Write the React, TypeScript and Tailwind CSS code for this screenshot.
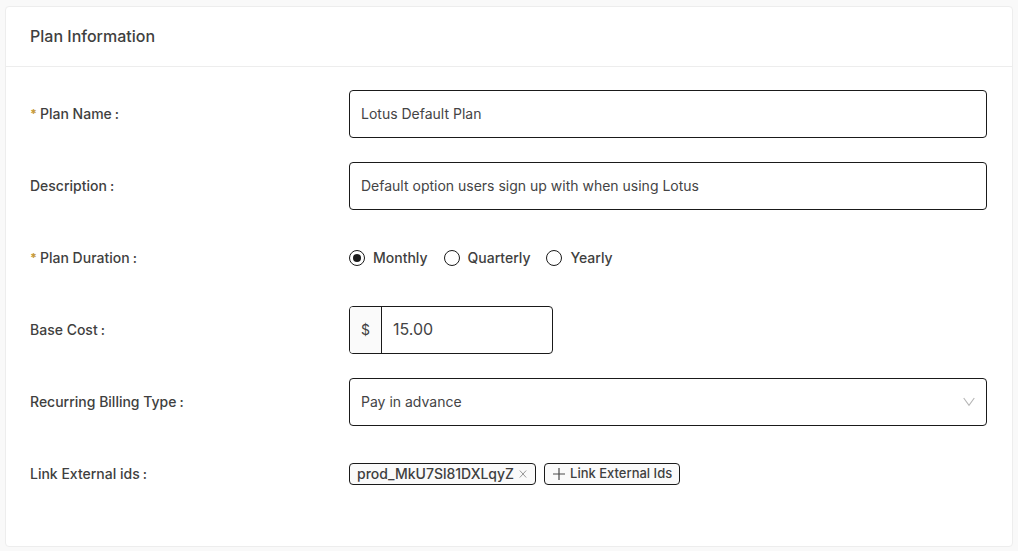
import { useState, type ReactNode } from "react";

const box =
  "h-12 w-full rounded-[4px] border border-[#1a1a1a] bg-white px-[11px] text-sm text-[#444445] outline-none";

function Label({
  id,
  htmlFor,
  required,
  children,
}: {
  id?: string;
  htmlFor?: string;
  required?: boolean;
  children: ReactNode;
}) {
  return (
    <label
      id={id}
      htmlFor={htmlFor}
      className="flex items-center text-sm font-medium text-[#3f3f40]"
    >
      {required && (
        <span aria-hidden="true" className="w-2.5 text-xs font-extrabold text-[#c69b3b]">
          *
        </span>
      )}
      {children}
      <span className="ml-[3px]">:</span>
    </label>
  );
}

function Row({ label, children }: { label: ReactNode; children: ReactNode }) {
  return (
    <div className="grid min-h-12 grid-cols-3 items-center">
      {label}
      <div className="col-span-2">{children}</div>
    </div>
  );
}

const durations = ["Monthly", "Quarterly", "Yearly"];

export default function App() {
  const [duration, setDuration] = useState("Monthly");
  const [linkedIds, setLinkedIds] = useState(["prod_MkU7Sl81DXLqyZ"]);

  return (
    <main className="min-h-screen bg-[#f9f9f9] px-[5px] pt-1.5 font-['Inter',sans-serif] text-[#3f3f40]">
      <section className="rounded-[4px] border border-[#ededed] bg-white">
        <header className="border-b border-[#ededed] px-6 py-[18px]">
          <h1 className="text-base leading-[23px] font-medium">Plan Information</h1>
        </header>
        <form
          className="flex flex-col gap-6 pt-[23px] pr-[25px] pb-12 pl-6"
          onSubmit={(e) => e.preventDefault()}
        >
          <Row label={<Label htmlFor="plan-name" required>Plan Name</Label>}>
            <input
              id="plan-name"
              type="text"
              defaultValue="Lotus Default Plan"
              className={`${box} pb-0.5`}
            />
          </Row>

          <Row label={<Label htmlFor="description">Description</Label>}>
            <input
              id="description"
              type="text"
              defaultValue="Default option users sign up with when using Lotus"
              className={`${box} pb-0.5`}
            />
          </Row>

          <Row label={<Label id="duration-label" required>Plan Duration</Label>}>
            <div role="radiogroup" aria-labelledby="duration-label" className="flex gap-4">
              {durations.map((name) => (
                <label key={name} className="flex items-center gap-2 text-sm font-medium">
                  <input
                    type="radio"
                    name="duration"
                    value={name}
                    checked={duration === name}
                    onChange={() => setDuration(name)}
                    className="grid size-4 appearance-none place-items-center rounded-full border border-[#1a1a1a] bg-white before:size-2 before:rounded-full checked:before:bg-[#1a1a1a]"
                  />
                  {name}
                </label>
              ))}
            </div>
          </Row>

          <Row label={<Label htmlFor="base-cost">Base Cost</Label>}>
            <div className="flex h-12 w-[204px] overflow-hidden rounded-[4px] border border-[#1a1a1a] bg-white">
              <span className="flex w-8 items-center justify-center border-r border-[#1a1a1a] bg-[#fafafa] text-sm">
                $
              </span>
              <input
                id="base-cost"
                type="text"
                inputMode="decimal"
                defaultValue="15.00"
                className="min-w-0 flex-1 px-[11px] pb-0.5 text-base text-[#444445] outline-none"
              />
            </div>
          </Row>

          <Row label={<Label htmlFor="billing-type">Recurring Billing Type</Label>}>
            <div className="relative">
              <select id="billing-type" defaultValue="advance" className={`${box} appearance-none`}>
                <option value="advance">Pay in advance</option>
                <option value="arrears">Pay in arrears</option>
              </select>
              <svg
                aria-hidden="true"
                viewBox="0 0 12 12"
                className="pointer-events-none absolute top-[18px] right-3 size-3"
                fill="none"
                stroke="#b5b5b5"
              >
                <path d="M0.7 2 L6 9.3 L11.3 2" strokeWidth="1.1" />
              </svg>
            </div>
          </Row>

          <Row label={<Label id="external-label">Link External ids</Label>}>
            <div role="group" aria-labelledby="external-label" className="flex flex-wrap gap-2">
              {linkedIds.map((id) => (
                <span
                  key={id}
                  className="flex h-[22px] items-center gap-1 rounded-[4px] border border-[#1a1a1a] bg-[#fafafa] px-[7px] text-sm font-medium"
                >
                  {id}
                  <button
                    type="button"
                    aria-label={`Remove ${id}`}
                    onClick={() => setLinkedIds(linkedIds.filter((other) => other !== id))}
                  >
                    <svg viewBox="0 0 10 10" className="size-2.5" fill="none" stroke="#8c8c8c">
                      <path d="M1.8 1.5 L8.2 8.5 M8.2 1.5 L1.8 8.5" strokeWidth="0.9" />
                    </svg>
                  </button>
                </span>
              ))}
              <button
                type="button"
                className="flex h-[22px] items-center gap-1 rounded-[4px] border border-[#1a1a1a] bg-[#fafafa] px-[7px] text-[13px] font-medium"
              >
                <svg viewBox="0 0 14 14" className="size-3.5" fill="none" stroke="#4a4a4a">
                  <path d="M7 1 V13 M1 7 H13" strokeWidth="1.2" />
                </svg>
                Link External Ids
              </button>
            </div>
          </Row>
        </form>
      </section>
    </main>
  );
}
